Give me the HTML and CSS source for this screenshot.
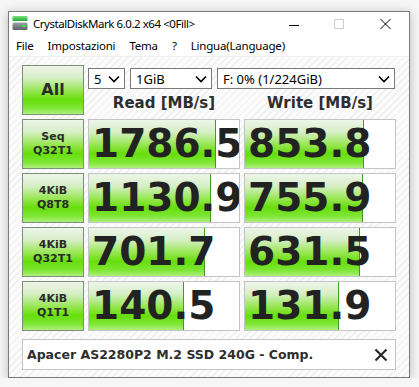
FILE: index.html
```html
<!DOCTYPE html>
<html lang="it">

<head>
    <meta charset="UTF-8">
    <title>CrystalDiskMark 6.0.2 x64 &lt;0Fill&gt;</title>
    <link rel="stylesheet" href="styles.css">
</head>

<body>
    <div class="window">
        <div class="titlebar">
            <svg class="app-icon" width="16" height="16" viewBox="0 0 16 16">
                <defs>
                    <linearGradient id="ig" x1="0" y1="0" x2="0" y2="1">
                        <stop offset="0" stop-color="#7fe07a" />
                        <stop offset="1" stop-color="#1fa83a" />
                    </linearGradient>
                    <linearGradient id="ib" x1="0" y1="0" x2="0" y2="1">
                        <stop offset="0" stop-color="#9aa3a8" />
                        <stop offset="1" stop-color="#5b6368" />
                    </linearGradient>
                </defs>
                <rect x="0.5" y="1" width="15" height="5" rx="1" fill="url(#ig)" />
                <rect x="0.5" y="7.5" width="15" height="7.5" rx="1.5" fill="url(#ib)" />
                <rect x="10" y="10" width="4" height="2" fill="#3ee04a" />
            </svg>
            <span class="title">CrystalDiskMark 6.0.2 x64 &lt;0Fill&gt;</span>
            <div class="controls">
                <svg width="46" height="22" viewBox="0 0 46 22"><path d="M18 13.5h10" stroke="#000" /></svg>
                <svg width="46" height="22" viewBox="0 0 46 22"><rect x="17.5" y="7.5" width="9" height="9" fill="none" stroke="#ccc" /></svg>
                <svg width="46" height="22" viewBox="0 0 46 22"><path d="M17.5 7l10 10M27.5 7l-10 10" stroke="#000" /></svg>
            </div>
        </div>

        <div class="menubar">
            <span>File</span>
            <span>Impostazioni</span>
            <span>Tema</span>
            <span>?</span>
            <span>Lingua(Language)</span>
        </div>

        <div class="content">
            <div class="grid">
                <div class="test-btn all">All</div>
                <div class="head-area">
                    <div class="selects">
                        <div class="combo count">5<svg width="12" height="8" viewBox="0 0 12 8"><path d="M1 1.5l5 5 5-5" fill="none" stroke="#000" stroke-width="1.6" /></svg></div>
                        <div class="combo size">1GiB<svg width="12" height="8" viewBox="0 0 12 8"><path d="M1 1.5l5 5 5-5" fill="none" stroke="#000" stroke-width="1.6" /></svg></div>
                        <div class="combo drive">F: 0% (1/224GiB)<svg width="12" height="8" viewBox="0 0 12 8"><path d="M1 1.5l5 5 5-5" fill="none" stroke="#000" stroke-width="1.6" /></svg></div>
                    </div>
                    <div class="col-titles">
                        <div>Read [MB/s]</div>
                        <div>Write [MB/s]</div>
                    </div>
                </div>

                <div class="test-btn">Seq<br>Q32T1</div>
                <div class="result"><div class="bar" style="width: 126px"></div><span class="value">1786.5</span></div>
                <div class="result"><div class="bar" style="width: 118px"></div><span class="value">853.8</span></div>

                <div class="test-btn">4KiB<br>Q8T8</div>
                <div class="result"><div class="bar" style="width: 121px"></div><span class="value">1130.9</span></div>
                <div class="result"><div class="bar" style="width: 117px"></div><span class="value">755.9</span></div>

                <div class="test-btn">4KiB<br>Q32T1</div>
                <div class="result"><div class="bar" style="width: 115px"></div><span class="value">701.7</span></div>
                <div class="result"><div class="bar" style="width: 114px"></div><span class="value">631.5</span></div>

                <div class="test-btn">4KiB<br>Q1T1</div>
                <div class="result"><div class="bar" style="width: 94px"></div><span class="value">140.5</span></div>
                <div class="result"><div class="bar" style="width: 93px"></div><span class="value">131.9</span></div>
            </div>

            <div class="drive-bar">
                <span>Apacer AS2280P2 M.2 SSD 240G - Comp.</span>
                <svg width="14" height="14" viewBox="0 0 14 14"><path d="M1.5 1.5l11 11M12.5 1.5l-11 11" stroke="#2b2b2b" stroke-width="2.2" /></svg>
            </div>
        </div>
    </div>
</body>

</html>
```

FILE: styles.css
```css
body {
    margin: 0;
    padding: 11px 0 0 8px;
    background-color: #f6f6f6;
    font-family: 'Noto Sans', sans-serif;
}

.window {
    width: 400px;
    height: 365px;
    border: 1px solid #7a7a7a;
    background-color: #fff;
    box-shadow: 0 2px 10px rgba(0, 0, 0, 0.25);
    display: flex;
    flex-direction: column;
    overflow: hidden;
}

.titlebar {
    height: 22px;
    display: flex;
    align-items: center;
    font-size: 11.5px;
    letter-spacing: -0.45px;
    color: #000;
}

.app-icon {
    margin: 0 5px 0 3px;
    flex-shrink: 0;
}

.title {
    flex-grow: 1;
}

.controls {
    display: flex;
    align-items: center;
}

.controls svg {
    display: block;
}

.menubar {
    height: 22px;
    display: flex;
    align-items: center;
    gap: 14px;
    padding-left: 7px;
    font-size: 11.5px;
    letter-spacing: -0.2px;
    border-bottom: 1px solid #f0f0f0;
}

.content {
    flex-grow: 1;
    padding: 8px 0 0 13px;
    background: repeating-linear-gradient(135deg, #fbfbfb 0 4px, #efefef 4px 5px);
}

.grid {
    display: grid;
    grid-template-columns: 62px 152px 152px;
    grid-auto-rows: 50px;
    gap: 4px;
}

.test-btn {
    display: flex;
    align-items: center;
    justify-content: center;
    text-align: center;
    border: 1px solid #7c8e76;
    background: linear-gradient(to bottom, #eef5ea 0%, #d6efc6 25%, #96e650 52%, #66de0c 70%, #7ee634 88%, #aef07e 100%);
    font-family: 'DejaVu Sans', sans-serif;
    font-weight: bold;
    font-size: 11px;
    line-height: 14px;
    color: #2a2a2a;
}

.test-btn.all {
    font-size: 16px;
}

.head-area {
    grid-column: span 2;
    display: flex;
    flex-direction: column;
}

.selects {
    display: flex;
    gap: 5px;
    margin-top: 3px;
}

.combo {
    height: 19px;
    border: 1px solid #7a7a7a;
    background-color: #fff;
    display: flex;
    align-items: center;
    justify-content: space-between;
    padding: 0 4px 0 5px;
    font-size: 13px;
}

.combo.count {
    width: 26px;
}

.combo.size {
    width: 71px;
}

.combo.drive {
    flex-grow: 1;
    margin-right: 1px;
}

.col-titles {
    display: grid;
    grid-template-columns: 152px 152px;
    gap: 4px;
    margin-top: 5px;
    font-family: 'DejaVu Sans', sans-serif;
    font-weight: bold;
    font-size: 15px;
    color: #2e2e2e;
    text-align: center;
}

.result {
    position: relative;
    border: 1px solid #c4c4c4;
    background-color: #fff;
    overflow: hidden;
}

.bar {
    position: absolute;
    top: 0;
    left: 0;
    bottom: 0;
    border-right: 1px solid #3f9c1c;
    background: linear-gradient(to bottom, #eef5ea 0%, #d6efc6 25%, #96e650 52%, #66de0c 70%, #7ee634 88%, #aef07e 100%);
}

.value {
    position: relative;
    display: block;
    padding-left: 3px;
    font-family: 'DejaVu Sans', sans-serif;
    font-weight: bold;
    font-size: 39px;
    line-height: 48px;
    color: #222;
    white-space: nowrap;
}

.drive-bar {
    width: 361px;
    height: 29px;
    margin-top: 8px;
    border: 1px solid #c4c4c4;
    background-color: #fff;
    display: flex;
    align-items: center;
    justify-content: space-between;
    padding: 0 7px 0 4px;
    font-family: 'DejaVu Sans', sans-serif;
    font-weight: bold;
    font-size: 12.5px;
    color: #2e2e2e;
}
```
